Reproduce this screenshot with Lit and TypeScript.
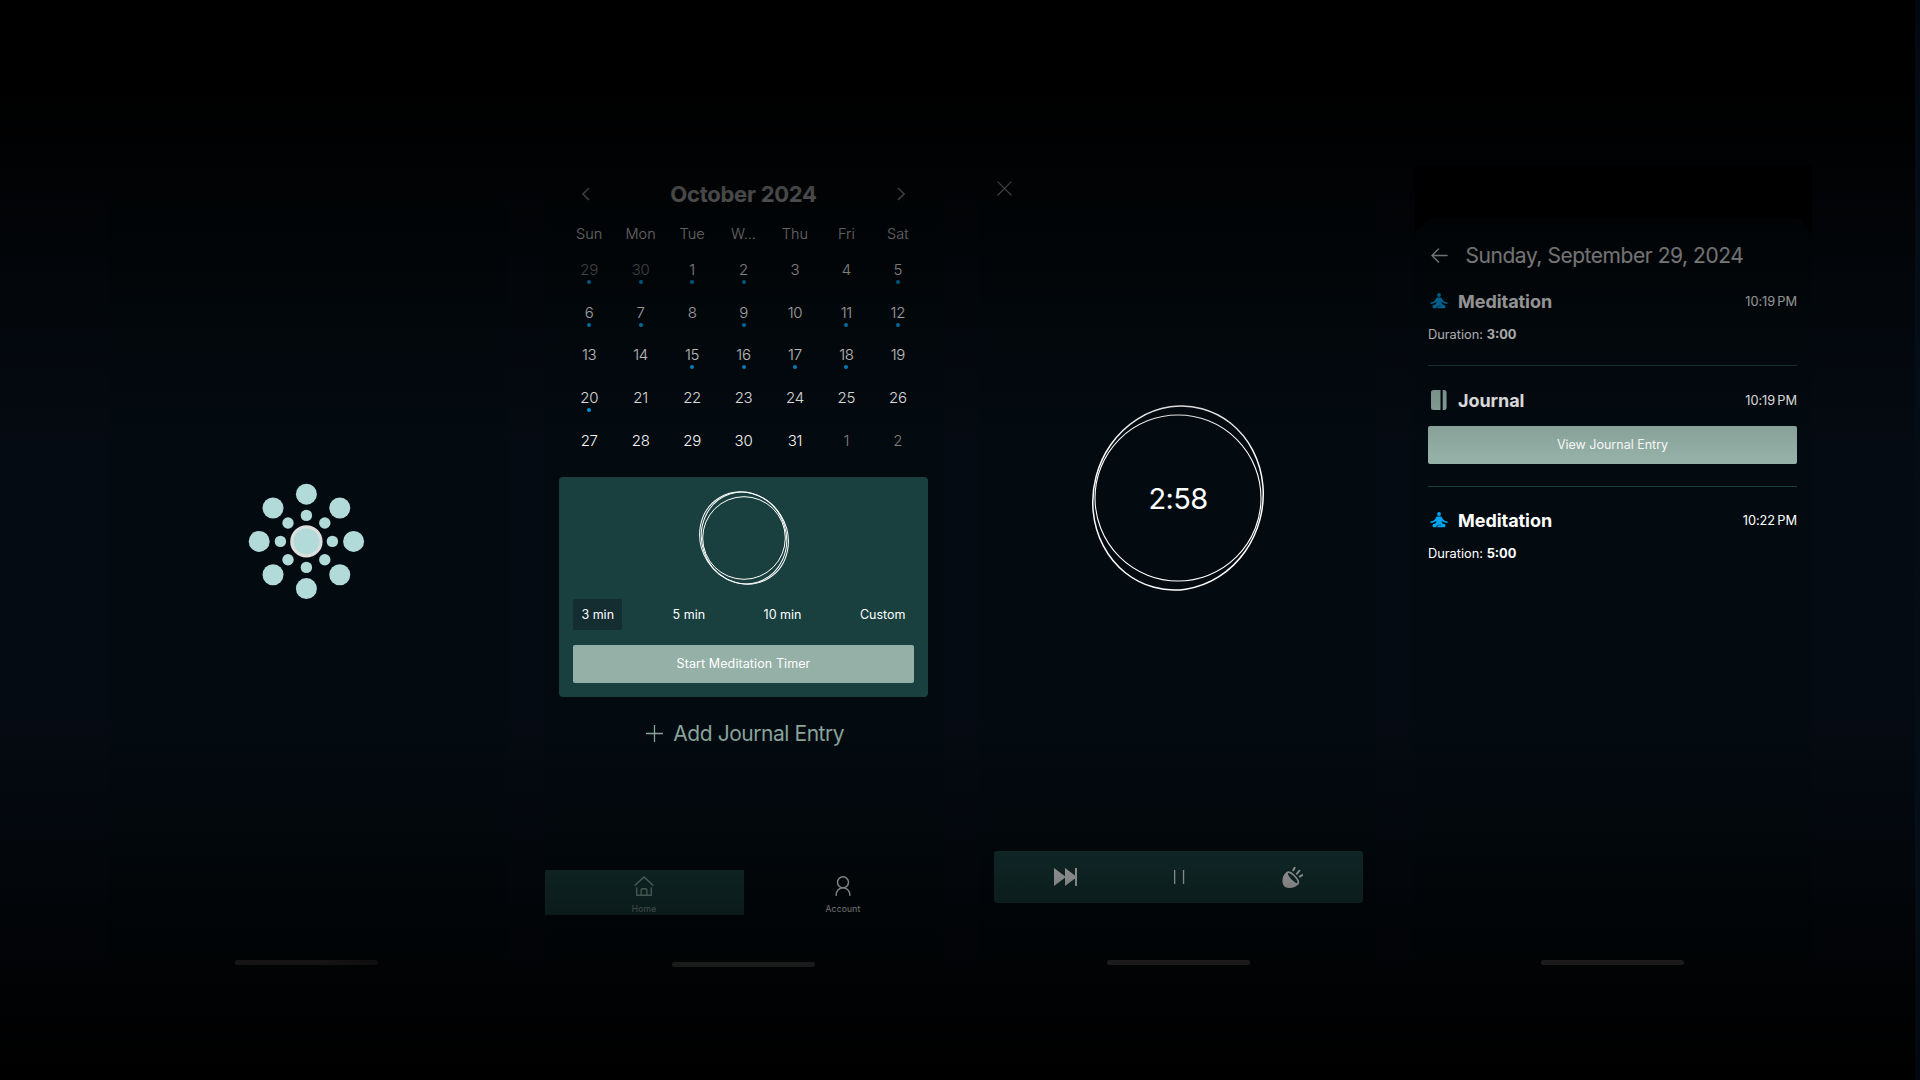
import { LitElement, html, css, svg } from "lit";
import { customElement } from "lit/decorators.js";

const WEEKDAYS = ["Sun", "Mon", "Tue", "W...", "Thu", "Fri", "Sat"];
const DAYS = [29, 30, ...Array.from({ length: 31 }, (_, i) => i + 1), 1, 2];
const MARKED = new Set([0, 1, 2, 3, 6, 7, 8, 10, 12, 13, 16, 17, 18, 19, 21]);

const petals = (count: number, dist: number, r: number) =>
  Array.from({ length: count }, (_, i) => {
    const a = (i * 2 * Math.PI) / count;
    return svg`<circle cx=${60 + dist * Math.cos(a)} cy=${60 + dist * Math.sin(a)} r=${r} fill="#b1dad8"/>`;
  });

const meditateIcon = html`<svg width="18" height="16" viewBox="0 0 18 16">
  <g fill="#00a6f4">
    <circle cx="9" cy="2" r="1.900" />
    <path d="M7.600 4.500h2.800c.9 0 1.300.5 1.800 1.400 1 2 2.500 3.200 5.300 3.500v1.500c-2.600-.1-4.400-.8-5.700-2.200v2.200l2.600 1c1.700.7 1.300 3.300-.6 3.300H7.300c-.2-1.200.5-1.900 1.600-1.900h2.300v-.6H9c-1.700 0-2.700 1-2.600 2.500H4.200c-1.900 0-2.300-2.600-.6-3.300l2.600-1V8.700C4.900 10.100 3.100 10.800.5 10.900V9.400c2.800-.3 4.300-1.500 5.300-3.500.5-.9.9-1.400 1.800-1.400z" />
  </g>
</svg>`;

@customElement("app-root")
export class AppRoot extends LitElement {
  static styles = css`
    :host {
      display: block;
      width: 1920px;
      height: 1080px;
      overflow: hidden;
      position: relative;
      background: #050b13;
      color: #fff;
      font-family: Inter, "Liberation Sans", sans-serif;
    }
    svg { display: block; flex: none; }
    .stage {
      display: flex;
      gap: 36.500px;
      box-sizing: border-box;
      height: 1080px;
      padding: 166px 0 105px 107.500px;
    }
    .edge {
      position: absolute;
      right: 0;
      top: 0;
      width: 5px;
      height: 1080px;
      background: linear-gradient(#02080d, #040d15 150px, #050e16 900px, #02080d);
    }
    .shade {
      position: absolute;
      inset: 0;
      background: linear-gradient(#000 92px, transparent 458px, transparent 706px, #000 1066px);
      pointer-events: none;
    }
    .phone {
      width: 398px;
      flex: none;
      box-sizing: border-box;
      background: #030b11;
      display: flex;
      flex-direction: column;
      align-items: center;
    }
    .grow { flex: 1; }
    .indicator {
      width: 143px;
      height: 5px;
      border-radius: 3px;
      background: #5e5e5e;
      margin-bottom: 10px;
    }
    .splash .indicator { background: linear-gradient(90deg, #484848 60%, #2e2e2e); }
    .splash svg { margin-top: 315.500px; }

    .calendar { margin-left: 2.500px; }
    .month {
      display: flex;
      align-items: center;
      justify-content: space-between;
      width: 323px;
      height: 24px;
      margin-top: 15.500px;
    }
    .month-name { font-size: 22px; font-weight: 650; letter-spacing: -0.250px; }
    .grid { display: grid; grid-template-columns: repeat(7, 51.450px); }
    .weekdays { margin-top: 18.500px; height: 20px; line-height: 20px; text-align: center; font-size: 14.500px; font-weight: 300; }
    .days { margin-top: 15px; grid-auto-rows: 42.700px; }
    .day { display: flex; flex-direction: column; align-items: center; font-size: 15px; line-height: 22px; font-weight: 300; letter-spacing: -0.300px; }
    .outside { color: #828282; }
    .dot { width: 4px; height: 4px; border-radius: 50%; background: #00a6f4; margin-top: -1px; }

    .card {
      width: 369.500px;
      height: 220.500px;
      box-sizing: border-box;
      margin-top: 4.500px;
      padding: 13px 14.700px 14px;
      border-radius: 4px;
      background: #193f3e;
      display: flex;
      flex-direction: column;
      align-items: center;
    }
    .chips { display: flex; justify-content: space-between; align-self: stretch; margin-top: 13px; }
    .chip { padding: 0 8px; height: 31px; line-height: 31px; font-size: 12.500px; border-radius: 2px; }
    .chosen { background: #142d30; }
    .button {
      align-self: stretch;
      height: 38px;
      line-height: 38px;
      text-align: center;
      border-radius: 2px;
      background: #94b0a7;
      font-size: 12.500px;
    }
    .card .button { margin-top: 15px; letter-spacing: 0.100px; }
    .add { display: flex; align-items: center; gap: 10.500px; height: 30px; margin-top: 21px; padding-left: 3px; color: #94b0a7; font-size: 21px; font-weight: 400; letter-spacing: -0.450px; }
    .tabs { display: flex; align-self: stretch; height: 45px; margin-bottom: 47.500px; }
    .tab { flex: 1; display: flex; flex-direction: column; align-items: center; font-size: 8.500px; line-height: 12px; padding-top: 6.500px; gap: 7px; box-sizing: border-box; letter-spacing: 0.200px; }
    .active { background: #193f3e; color: #94b0a7; }
    .calendar .indicator { margin-bottom: 8px; }

    .close { align-self: flex-start; margin: 15px 0 0 18px; }
    .ring { display: grid; place-items: center; margin-top: 206.500px; }
    .ring > * { grid-area: 1 / 1; }
    .left { font-size: 29px; font-weight: 400; letter-spacing: -0.700px; padding-top: 1px; }
    .controls {
      display: flex;
      justify-content: space-between;
      align-items: center;
      width: 369px;
      height: 52px;
      box-sizing: border-box;
      padding: 0 60px;
      border-radius: 3px;
      background: #193f3e;
      margin-bottom: 57px;
    }

    .entries { background: #000; }
    .back-sheet { width: 380px; height: 8px; margin-top: 52px; border-radius: 9px 9px 0 0; background: #02070a; }
    .sheet {
      flex: 1;
      align-self: stretch;
      display: flex;
      flex-direction: column;
      box-sizing: border-box;
      padding: 12px 14.500px 0;
      border-radius: 10px 10px 0 0;
      background: #030b11;
    }
    .sheet .indicator { align-self: center; }
    .date { display: flex; align-items: center; gap: 18px; height: 34px; padding-left: 2.500px; font-size: 21px; font-weight: 400; letter-spacing: -0.450px; }
    .entry { display: flex; align-items: center; height: 24px; padding-left: 2px; }
    .name { flex: 1; padding-left: 10px; font-size: 18px; font-weight: 650; letter-spacing: -0.050px; }
    .time { font-size: 12.800px; font-weight: 400; letter-spacing: -0.050px; }
    .duration { height: 20px; line-height: 20px; margin-top: 12px; font-size: 12.800px; font-weight: 400; }
    .duration b { font-weight: 650; }
    .rule { height: 1px; background: #193f3e; }
    .e1 { margin-top: 17px; }
    .r1 { margin-top: 20px; }
    .e2 { margin-top: 22px; }
    .sheet .button { flex: none; margin-top: 14px; }
    .r2 { margin-top: 22px; }
    .e3 { margin-top: 21px; }
  `;

  private indicator() {
    return html`<div class="grow"></div><div class="indicator"></div>`;
  }

  render() {
    return html`
      <div class="stage">
        <section class="phone splash">
          <svg width="120" height="120" viewBox="0.600 0.600 120 120">
            ${petals(8, 47.2, 10.5)} ${petals(8, 26, 5.7)}
            <circle cx="60" cy="60" r="14.600" fill="#b1dad8" stroke="#dedede" stroke-width="3.200" />
          </svg>
          ${this.indicator()}
        </section>

        <section class="phone calendar">
          <div class="month">
            <svg width="8" height="14" viewBox="0 0 8 14" fill="none" stroke="#cfdcd8" stroke-width="1.600"><path d="M7 1 1 7l6 6" /></svg>
            <span class="month-name">October 2024</span>
            <svg width="8" height="14" viewBox="0 0 8 14" fill="none" stroke="#cfdcd8" stroke-width="1.600"><path d="m1 1 6 6-6 6" /></svg>
          </div>
          <div class="grid weekdays">${WEEKDAYS.map((d) => html`<span>${d}</span>`)}</div>
          <div class="grid days">
            ${DAYS.map((d, i) => html`<div class="day">
              <span class=${i < 2 || i > 32 ? "outside" : ""}>${d}</span>
              ${MARKED.has(i) ? html`<span class="dot"></span>` : ""}
            </div>`)}
          </div>
          <div class="card">
            <svg width="96" height="96" viewBox="-48 -48 96 96" fill="none" stroke="#fff">
              <circle r="41.300" stroke-width="1" />
              <ellipse rx="43.200" ry="47.200" transform="rotate(-32)" stroke-width="1" />
              <ellipse rx="42.300" ry="46.200" transform="rotate(-18)" stroke-width="1" />
            </svg>
            <div class="chips">
              <span class="chip chosen">3 min</span><span class="chip">5 min</span>
              <span class="chip">10 min</span><span class="chip">Custom</span>
            </div>
            <div class="button">Start Meditation Timer</div>
          </div>
          <div class="add">
            <svg width="17" height="17" viewBox="0 0 17 17" stroke="#94b0a7" stroke-width="1.300"><path d="M8.500 0v17M0 8.500h17" /></svg>
            <span>Add Journal Entry</span>
          </div>
          <div class="grow"></div>
          <div class="tabs">
            <div class="tab active">
              <svg width="20" height="20" viewBox="0 0 20 20" fill="none" stroke="#94b0a7" stroke-width="1.400" stroke-linecap="round" stroke-linejoin="round">
                <path d="M1 9.300 10 .900l9 8.400M2.700 12v7.300h14.600V12M7.200 19.200v-5.200q0-1.200 1.200-1.200h3.200q1.200 0 1.200 1.200v5.200" />
              </svg>
              <span>Home</span>
            </div>
            <div class="tab">
              <svg width="16" height="20" viewBox="0 0 16 20" fill="none" stroke="#fff" stroke-width="1.500" stroke-linecap="round">
                <circle cx="8" cy="6.300" r="5.500" /><path d="M1.200 19.300v-.8a6.800 6.800 0 0 1 13.600 0v.8" />
              </svg>
              <span>Account</span>
            </div>
          </div>
          <div class="indicator"></div>
        </section>

        <section class="phone timer">
          <svg class="close" width="15" height="15" viewBox="0 0 15 15" stroke="#fff" stroke-width="1.200"><path d="m.6.6 13.800 13.800M14.400.6.6 14.400" /></svg>
          <div class="ring">
            <svg width="190" height="190" viewBox="-95 -95 190 190" fill="none" stroke="#fff">
              <circle r="83" stroke-width="1.100" />
              <ellipse rx="84.700" ry="92.500" transform="rotate(15)" stroke-width="1.500" />
            </svg>
            <span class="left">2:58</span>
          </div>
          <div class="grow"></div>
          <div class="controls">
            <svg width="23" height="18" viewBox="0 0 23 18" fill="#fff"><path d="M0 0l11 8.300V0l10 7.600V0h2v18h-2v-7.600L11 18V9.700L0 18z" /></svg>
            <svg width="11" height="14" viewBox="0 0 11 14" fill="#fff"><path d="M0 0h1.300v14H0zM8.900 0h1.300v14H8.900z" /></svg>
            <svg width="21" height="21" viewBox="0 0 21 21">
              <path d="M4.500 5C1 8 0 12 .6 15.500 1 19 3 20.700 6.500 20.900c4 .2 8-1 10.500-4.100z" fill="#fff" />
              <ellipse cx="10.700" cy="10.900" rx="2.700" ry="7.600" transform="rotate(-44 10.700 10.900)" fill="#193f3e" stroke="#fff" stroke-width="1.600" />
              <path d="m11.200 3.300 1.500-2.600M14.800 6.800l2.600-3.100M17.700 9.600l2.500-1.500" stroke="#fff" stroke-width="1.900" stroke-linecap="round" />
            </svg>
          </div>
          <div class="indicator"></div>
        </section>

        <section class="phone entries">
          <div class="back-sheet"></div>
          <div class="sheet">
            <div class="date">
              <svg width="17" height="15" viewBox="0 0 17 15" fill="none" stroke="#fff" stroke-width="1.500" stroke-linecap="round" stroke-linejoin="round"><path d="M16 7.500H1M7.500 1 1 7.500 7.500 14" /></svg>
              <span>Sunday, September 29, 2024</span>
            </div>
            <div class="entry e1">${meditateIcon}<span class="name">Meditation</span><span class="time">10:19&#8239;PM</span></div>
            <div class="duration">Duration: <b>3:00</b></div>
            <div class="rule r1"></div>
            <div class="entry e2">
              <svg width="18" height="20" viewBox="0 0 18 20" fill="#94b0a7"><path d="M3.500 0H10.500v20H3.500a2.500 2.500 0 0 1-2.500-2.500V2.500A2.500 2.500 0 0 1 3.500 0zM12.700 0h1.400a2.500 2.500 0 0 1 2.500 2.500v15a2.500 2.500 0 0 1-2.500 2.500h-1.400z" /></svg>
              <span class="name">Journal</span><span class="time">10:19&#8239;PM</span>
            </div>
            <div class="button">View Journal Entry</div>
            <div class="rule r2"></div>
            <div class="entry e3">${meditateIcon}<span class="name">Meditation</span><span class="time">10:22&#8239;PM</span></div>
            <div class="duration">Duration: <b>5:00</b></div>
            ${this.indicator()}
          </div>
        </section>
      </div>
      <div class="shade"></div>
      <div class="edge"></div>
    `;
  }
}
